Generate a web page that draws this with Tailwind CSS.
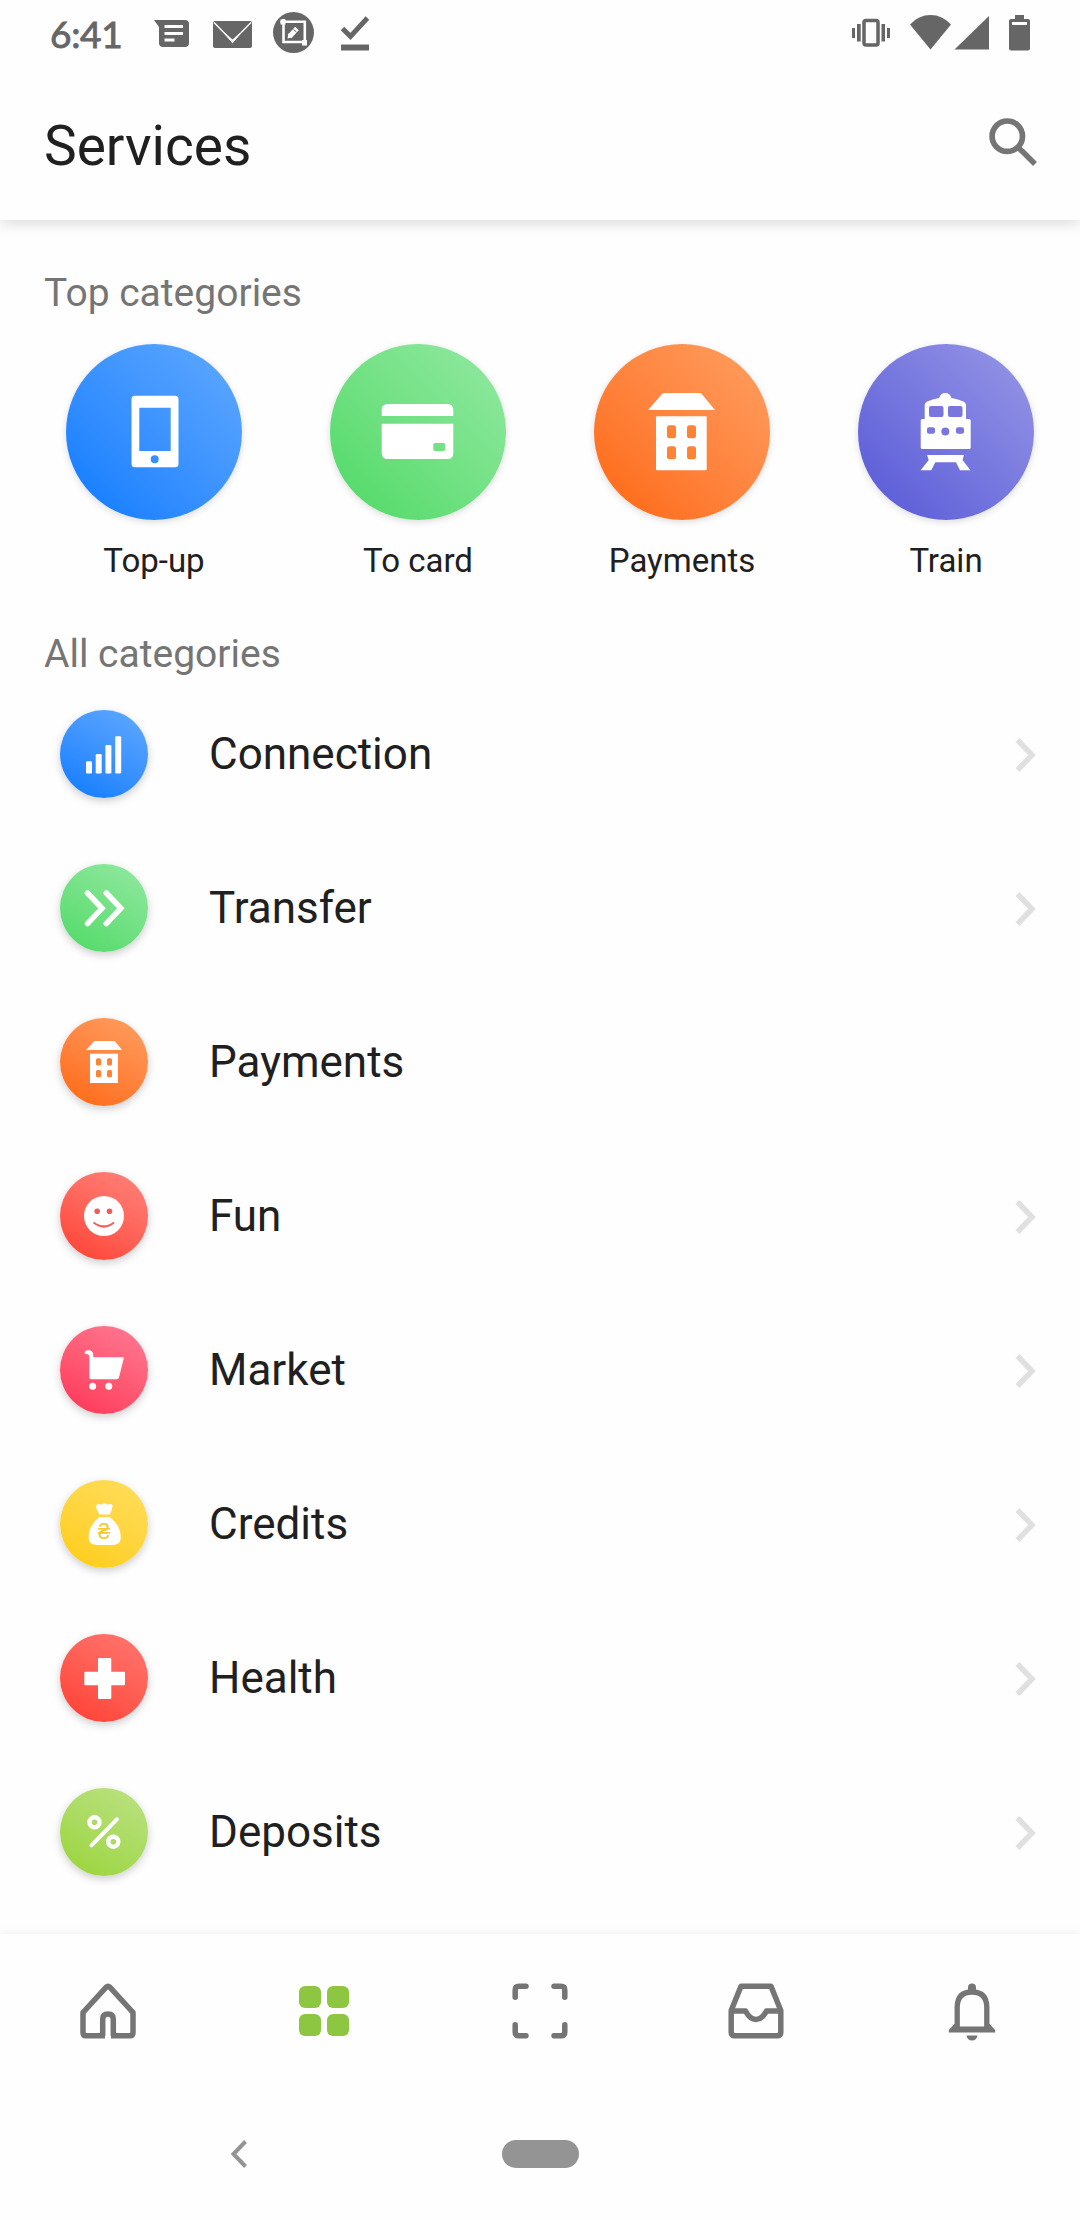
<!DOCTYPE html>
<html lang="en">
<head>
    <meta charset="UTF-8">
    <meta name="viewport" content="width=device-width, initial-scale=1.0">
    <title>Services</title>
    <script src="https://cdn.jsdelivr.net/npm/@tailwindcss/browser@4"></script>
</head>
<body class="bg-[#fefefe] text-[#202020] font-['Roboto',sans-serif] flex flex-col h-[2220px] w-[1080px] overflow-hidden">
    <!-- Header -->
    <header class="h-[220px] shrink-0 bg-[#fefefe] shadow-[0_3px_14px_rgba(0,0,0,0.15)]">
        <!-- Status bar -->
        <div class="h-[66px] flex items-center justify-between pl-[50px] pr-[50px] text-[#666]">
            <div class="flex items-center h-full">
                <span class="w-[104px] font-['Lato',sans-serif] text-[37px] leading-[66px] pt-[2px] tracking-[-0.3px] [-webkit-text-stroke:0.9px_#666]">6:41</span>
                <svg class="w-[215px] h-[66px]" viewBox="154 0 215 66" fill="currentColor">
                    <path fill-rule="evenodd" d="M154 20h31a4 4 0 0 1 4 4v19a4 4 0 0 1-4 4h-22a4 4 0 0 1-4-4V27zM164.500 25v3h18.500v-3zM164.500 32v3h18.500v-3zM164.500 38.500v3h10v-3z"/>
                    <rect x="213" y="21" width="39" height="27" rx="2"/>
                    <path d="M214 22.500L232.500 41.500 251 22.500" fill="none" stroke="#fefefe" stroke-width="1.400"/>
                    <path d="M222 30.500L232.500 43.500 243 30.500 232.500 39.500z" fill="#fefefe"/>
                    <circle cx="293.500" cy="32.500" r="20.500"/>
                    <g fill="none" stroke="#fefefe" stroke-width="2.600">
                        <path d="M280.500 21.800h24.300v23.500M283.500 19v23h23.500"/>
                        <path d="M289.500 36.500L297 28.500" stroke-width="5"/>
                    </g>
                    <path d="M280.500 19.500h5v5h-5zM302 40h5v5.500h-5z" fill="#fefefe"/>
                    <path d="M287.500 38.500l1-5 4 3.700z" fill="#fefefe"/>
                    <path d="M293.500 29.300l3 2.800" stroke="#666" stroke-width="1"/>
                    <path d="M342.500 28.500l8 8 17-18.500" fill="none" stroke="currentColor" stroke-width="5"/>
                    <path d="M341 44.500h28v6h-28z"/>
                </svg>
            </div>
            <svg class="w-[179px] h-[66px]" viewBox="851 0 179 66" fill="currentColor">
                <rect x="864" y="20.500" width="14" height="24.500" rx="2" fill="none" stroke="currentColor" stroke-width="3.500"/>
                <path d="M857 24h3.700v17.500H857zM852 28h3v10h-3zM881.500 24h3.500v17.500h-3.500zM887 28h3v10h-3z"/>
                <path d="M910 24.500Q918.500 15 930.500 15T951 24.500L930.500 49.500z"/>
                <path d="M989 16v33.500h-34.500z"/>
                <path fill-rule="evenodd" d="M1015 15h9v4h4a2 2 0 0 1 2 2v27.500a2 2 0 0 1-2 2h-17a2 2 0 0 1-2-2V21a2 2 0 0 1 2-2h4zM1012 22v3h15v-3z"/>
            </svg>
        </div>
        <!-- Toolbar -->
        <div class="h-[154px] flex items-center justify-between pl-[44px] pr-[42px]">
            <h1 class="text-[55px] leading-[64px] pt-[6px]">Services</h1>
            <svg class="w-[50px] h-[50px] text-[#757575]" viewBox="988 118 50 50" fill="none" stroke="currentColor">
                <circle cx="1007.300" cy="136.200" r="15.200" stroke-width="5.700"/>
                <path d="M1019 148l3 3.500M1021.500 150.500L1035 164" stroke-width="5.500"/>
            </svg>
        </div>
    </header>

    <!-- Content -->
    <main class="flex-1 overflow-hidden pt-[51px]">
        <h2 class="pl-[44px] text-[39px] leading-[44px] text-[#757575]">Top categories</h2>
        <section class="mt-[29px] flex pl-[22px]">
            <div class="w-[264px] shrink-0 flex flex-col items-center">
                <div class="size-44 rounded-full bg-linear-45 from-[#007aff] to-[#60a9ff] shadow-[0_2px_7px_rgba(0,0,0,0.14)]">
                    <svg viewBox="0 0 176 176" fill="#fff">
                        <path fill-rule="evenodd" d="M69 51.700h40a3.500 3.500 0 0 1 3.500 3.500v64.500a3.500 3.500 0 0 1-3.500 3.500H69a3.500 3.500 0 0 1-3.500-3.500V55.200a3.500 3.500 0 0 1 3.500-3.500zM73.300 63.700V107h31.400V63.700zM84.700 115.300a4 4 0 1 0 8 0 4 4 0 1 0-8 0z"/>
                    </svg>
                </div>
                <span class="mt-[21px] text-[33px] leading-10">Top-up</span>
            </div>
            <div class="w-[264px] shrink-0 flex flex-col items-center">
                <div class="size-44 rounded-full bg-linear-45 from-[#4cd964] to-[#92e9a2] shadow-[0_2px_7px_rgba(0,0,0,0.14)]">
                    <svg viewBox="0 0 176 176" fill="#fff">
                        <path d="M51.700 72v-6.500a5.500 5.500 0 0 1 5.500-5.500h60.600a5.500 5.500 0 0 1 5.500 5.500V72z"/>
                        <path fill-rule="evenodd" d="M51.700 79.700h71.600v29.800a5.500 5.500 0 0 1-5.500 5.500H57.200a5.500 5.500 0 0 1-5.500-5.500zM105 99a1.700 1.700 0 0 0-1.700 1.700v4.600A1.700 1.700 0 0 0 105 107h8.600a1.700 1.700 0 0 0 1.700-1.700v-4.600a1.700 1.700 0 0 0-1.700-1.700z"/>
                    </svg>
                </div>
                <span class="mt-[21px] text-[33px] leading-10">To card</span>
            </div>
            <div class="w-[264px] shrink-0 flex flex-col items-center">
                <div class="size-44 rounded-full bg-linear-45 from-[#ff6600] to-[#ff9f60] shadow-[0_2px_7px_rgba(0,0,0,0.14)]">
                    <svg viewBox="0 0 176 176" fill="#fff">
                        <path d="M70 49h35.500l1.800.600L121 66H54l14.500-16.400z"/>
                        <rect x="62" y="72.300" width="50.700" height="54" rx="1"/>
                        <g fill="#ff8334">
                            <rect x="73" y="81.300" width="9" height="13" rx="2.500"/>
                            <rect x="93" y="81.300" width="9" height="13" rx="2.500"/>
                            <rect x="73" y="102.300" width="9" height="13" rx="2.500"/>
                            <rect x="93" y="102.300" width="9" height="13" rx="2.500"/>
                        </g>
                    </svg>
                </div>
                <span class="mt-[21px] text-[33px] leading-10">Payments</span>
            </div>
            <div class="w-[264px] shrink-0 flex flex-col items-center">
                <div class="size-44 rounded-full bg-linear-45 from-[#5856d6] to-[#9997e6] shadow-[0_2px_7px_rgba(0,0,0,0.14)]">
                    <svg viewBox="0 0 176 176" fill="#fff">
                        <path d="M66.700 76V61q0-2.500 2.500-3.500 5-2.500 12-3.500 1.500-5 6.100-5t6.100 5q7 1 12 3.500 2.600 1 2.600 3.500v15z"/>
                        <rect x="62.700" y="75" width="50" height="30" rx="1.500"/>
                        <path d="M69 111h37l-1.500 5 8 10.300H102l-4-8H77.300l-4 8H62.700l8-10.300z"/>
                        <g fill="#7977de">
                            <rect x="71" y="62" width="14.500" height="11" rx="2"/>
                            <rect x="90" y="62" width="14.500" height="11" rx="2"/>
                            <rect x="69" y="83.300" width="8" height="6.500" rx="2"/>
                            <rect x="98" y="83.300" width="8" height="6.500" rx="2"/>
                            <circle cx="87.300" cy="87.500" r="4"/>
                        </g>
                    </svg>
                </div>
                <span class="mt-[21px] text-[33px] leading-10">Train</span>
            </div>
        </section>

        <h2 class="mt-[51px] pl-[44px] text-[39px] leading-[44px] text-[#757575]">All categories</h2>
        <ul class="mt-px text-[44px] leading-[52px]">
            <li class="h-[154px] flex items-center pl-[60px] pr-[43px]">
                <div class="size-22 rounded-full bg-linear-30 from-[#007aff] to-[#60a9ff] shadow-[0_3px_8px_rgba(0,0,0,0.2)]">
                    <svg viewBox="0 0 88 88" fill="#fff">
                        <rect x="26" y="51.300" width="6" height="12.200" rx="1.200"/>
                        <rect x="35.700" y="44" width="6" height="19.500" rx="1.200"/>
                        <rect x="45.400" y="35" width="6" height="28.500" rx="1.200"/>
                        <rect x="55.200" y="26.300" width="6" height="37.200" rx="1.200"/>
                    </svg>
                </div>
                <span class="ml-[61px] flex-1">Connection</span>
                <svg class="w-[22px] h-[36px]" viewBox="0 0 22 36" fill="none" stroke="#e0e0e0" stroke-width="5.500"><path d="M2.500 4L17 19 2.500 34"/></svg>
            </li>
            <li class="h-[154px] flex items-center pl-[60px] pr-[43px]">
                <div class="size-22 rounded-full bg-linear-30 from-[#4cd964] to-[#92e9a2] shadow-[0_3px_8px_rgba(0,0,0,0.2)]">
                    <svg viewBox="0 0 88 88" fill="none" stroke="#fff" stroke-width="5.500" stroke-linecap="round">
                        <path d="M27.500 29l14.500 15.300-14.500 15.300M46.300 29l14.500 15.300-14.500 15.300"/>
                    </svg>
                </div>
                <span class="ml-[61px] flex-1">Transfer</span>
                <svg class="w-[22px] h-[36px]" viewBox="0 0 22 36" fill="none" stroke="#e0e0e0" stroke-width="5.500"><path d="M2.500 4L17 19 2.500 34"/></svg>
            </li>
            <li class="h-[154px] flex items-center pl-[60px] pr-[43px]">
                <div class="size-22 rounded-full bg-linear-30 from-[#ff6600] to-[#ff9f60] shadow-[0_3px_8px_rgba(0,0,0,0.2)]">
                    <svg viewBox="0 0 88 88" fill="#fff">
                        <path d="M34.300 23h20.400L62 32H26z"/>
                        <path d="M30 35.700h28V65H30z"/>
                        <g fill="#ff8334">
                            <rect x="36" y="40.300" width="5" height="7.300" rx="1.500"/>
                            <rect x="47" y="40.300" width="5" height="7.300" rx="1.500"/>
                            <rect x="36" y="52" width="5" height="7.300" rx="1.500"/>
                            <rect x="47" y="52" width="5" height="7.300" rx="1.500"/>
                        </g>
                    </svg>
                </div>
                <span class="ml-[61px] flex-1">Payments</span>
            </li>
            <li class="h-[154px] flex items-center pl-[60px] pr-[43px]">
                <div class="size-22 rounded-full bg-linear-30 from-[#ff3b30] to-[#ff837c] shadow-[0_3px_8px_rgba(0,0,0,0.2)]">
                    <svg viewBox="0 0 88 88">
                        <circle cx="44" cy="44" r="20" fill="#fff"/>
                        <circle cx="37.200" cy="39.300" r="2.800" fill="#e85f5a"/>
                        <circle cx="49.500" cy="39.300" r="2.800" fill="#e85f5a"/>
                        <path d="M33.500 50.500Q44 58.500 54 50.500" fill="none" stroke="#f25f59" stroke-width="2.200"/>
                    </svg>
                </div>
                <span class="ml-[61px] flex-1">Fun</span>
                <svg class="w-[22px] h-[36px]" viewBox="0 0 22 36" fill="none" stroke="#e0e0e0" stroke-width="5.500"><path d="M2.500 4L17 19 2.500 34"/></svg>
            </li>
            <li class="h-[154px] flex items-center pl-[60px] pr-[43px]">
                <div class="size-22 rounded-full bg-linear-30 from-[#ff2d55] to-[#ff7a94] shadow-[0_3px_8px_rgba(0,0,0,0.2)]">
                    <svg viewBox="0 0 88 88" fill="#fff">
                        <path d="M24.300 26.500q1-2.300 4-2.300 5 0 5 5v2.100h29.500q1.200 0 .900 1.200L59 51.500q-.500 1.700-2 1.700H31q-1.700 0-1.700-1.700V31q0-2.700-2-2.700-2.700 0-3-1.800z"/>
                        <circle cx="32.600" cy="60.300" r="3.500"/>
                        <circle cx="48.800" cy="60.300" r="3.500"/>
                    </svg>
                </div>
                <span class="ml-[61px] flex-1">Market</span>
                <svg class="w-[22px] h-[36px]" viewBox="0 0 22 36" fill="none" stroke="#e0e0e0" stroke-width="5.500"><path d="M2.500 4L17 19 2.500 34"/></svg>
            </li>
            <li class="h-[154px] flex items-center pl-[60px] pr-[43px]">
                <div class="size-22 rounded-full bg-linear-30 from-[#ffcc00] to-[#ffde5c] shadow-[0_3px_8px_rgba(0,0,0,0.2)]">
                    <svg viewBox="0 0 88 88" fill="#fff">
                        <path d="M36 25.500q3-2.500 5.500-.500 3-4 6 0 3-2 5.200.500-.500 4.500-3 9H39.500q-3.300-4-3.500-9z"/>
                        <path d="M39.500 37h10Q60.700 45 60.700 57.500q0 7.500-8 7.500H37q-8.300 0-8.300-7.500Q28.700 45 39.500 37z"/>
                        <text x="44.200" y="59.300" text-anchor="middle" class="font-['Roboto',sans-serif] text-[22px] font-medium" fill="#f3c93a">₴</text>
                    </svg>
                </div>
                <span class="ml-[61px] flex-1">Credits</span>
                <svg class="w-[22px] h-[36px]" viewBox="0 0 22 36" fill="none" stroke="#e0e0e0" stroke-width="5.500"><path d="M2.500 4L17 19 2.500 34"/></svg>
            </li>
            <li class="h-[154px] flex items-center pl-[60px] pr-[43px]">
                <div class="size-22 rounded-full bg-linear-30 from-[#ff3b30] to-[#ff7770] shadow-[0_3px_8px_rgba(0,0,0,0.2)]">
                    <svg viewBox="0 0 88 88" fill="#fff">
                        <rect x="38" y="24" width="13.300" height="41" rx="1"/>
                        <rect x="24.300" y="37.700" width="40.700" height="13.500" rx="1"/>
                    </svg>
                </div>
                <span class="ml-[61px] flex-1">Health</span>
                <svg class="w-[22px] h-[36px]" viewBox="0 0 22 36" fill="none" stroke="#e0e0e0" stroke-width="5.500"><path d="M2.500 4L17 19 2.500 34"/></svg>
            </li>
            <li class="h-[154px] flex items-center pl-[60px] pr-[43px]">
                <div class="size-22 rounded-full bg-linear-30 from-[#99d433] to-[#bce283] shadow-[0_3px_8px_rgba(0,0,0,0.2)]">
                    <svg viewBox="0 0 88 88" fill="none" stroke="#fff" stroke-linecap="round">
                        <circle cx="34.500" cy="34.300" r="5" stroke-width="4.400"/>
                        <circle cx="53.300" cy="53.700" r="5" stroke-width="4.400"/>
                        <path d="M56.800 31.300L31.500 57.300" stroke-width="4"/>
                    </svg>
                </div>
                <span class="ml-[61px] flex-1">Deposits</span>
                <svg class="w-[22px] h-[36px]" viewBox="0 0 22 36" fill="none" stroke="#e0e0e0" stroke-width="5.500"><path d="M2.500 4L17 19 2.500 34"/></svg>
            </li>
        </ul>
    </main>

    <!-- Bottom navigation -->
    <nav class="relative h-[154px] shrink-0 flex items-center bg-[#fefefe] text-[#757575] shadow-[0_-2px_9px_rgba(0,0,0,0.05)]">
        <div class="flex-1 flex justify-center">
            <svg class="size-15" viewBox="0 0 60 60" fill="none" stroke="currentColor" stroke-width="5.500" stroke-linejoin="round">
                <path d="M27 54.800H8q-3 0-3-3V31.500L28.200 6.200q1.800-2 3.600 0L55 31.500v20.300q0 3-3 3H33"/>
                <path d="M24.700 54.800V38.500q0-5.500 5.300-5.500t5.300 5.500v16.300"/>
            </svg>
        </div>
        <div class="flex-1 flex justify-center">
            <div class="grid grid-cols-2 gap-[6px]">
                <span class="size-[22px] rounded-[6px] bg-[#8dc641]"></span>
                <span class="size-[22px] rounded-[6px] bg-[#8dc641]"></span>
                <span class="size-[22px] rounded-[6px] bg-[#8dc641]"></span>
                <span class="size-[22px] rounded-[6px] bg-[#8dc641]"></span>
            </div>
        </div>
        <div class="flex-1 flex justify-center">
            <svg class="size-15" viewBox="0 0 60 60" fill="none" stroke="currentColor" stroke-width="5.500" stroke-linecap="round">
                <path d="M5.200 16.300V9q0-3.800 3.800-3.800h7M44 5.200h7q3.800 0 3.800 3.800v7.300M5.200 43.700V51q0 3.800 3.800 3.800h7M44 54.800h7q3.800 0 3.800-3.800v-7.300"/>
            </svg>
        </div>
        <div class="flex-1 flex justify-center">
            <svg class="size-15" viewBox="0 0 60 60" fill="none" stroke="currentColor" stroke-width="5.500" stroke-linejoin="round">
                <path d="M5.200 29.500V51q0 3.800 3.800 3.800h42q3.800 0 3.800-3.800V29.500L45 5.200H15z"/>
                <path d="M5.200 30H19.500Q24 38.500 30 38.500T40.500 30H54.800"/>
            </svg>
        </div>
        <div class="flex-1 flex justify-center">
            <svg class="size-15" viewBox="0 0 60 60" fill="none" stroke="currentColor" stroke-width="5.300">
                <path d="M15.200 48V26.500Q15.200 11 30 11T44.800 26.500V48"/>
                <path d="M26 11V6.500a4 4 0 0 1 8 0V11zM6.800 51.500V49l5.700-6h2l3 2.500h25l3-2.500h2l5.700 6v2.500zM24.500 54.500h11q-1 5-5.500 5t-5.500-5z" fill="currentColor" stroke="none"/>
            </svg>
        </div>
    </nav>

    <!-- System navigation -->
    <footer class="relative h-[132px] shrink-0 bg-[#fefefe] flex items-center pl-[229px] text-[#949494]">
        <svg class="w-[20px] h-[30px]" viewBox="0 0 20 30" fill="none" stroke="currentColor" stroke-width="4"><path d="M16.500 2.500L4.500 15l12 12.500"/></svg>
        <span class="ml-[253px] w-[77px] h-[28px] rounded-full bg-[#949494]"></span>
    </footer>
</body>
</html>
